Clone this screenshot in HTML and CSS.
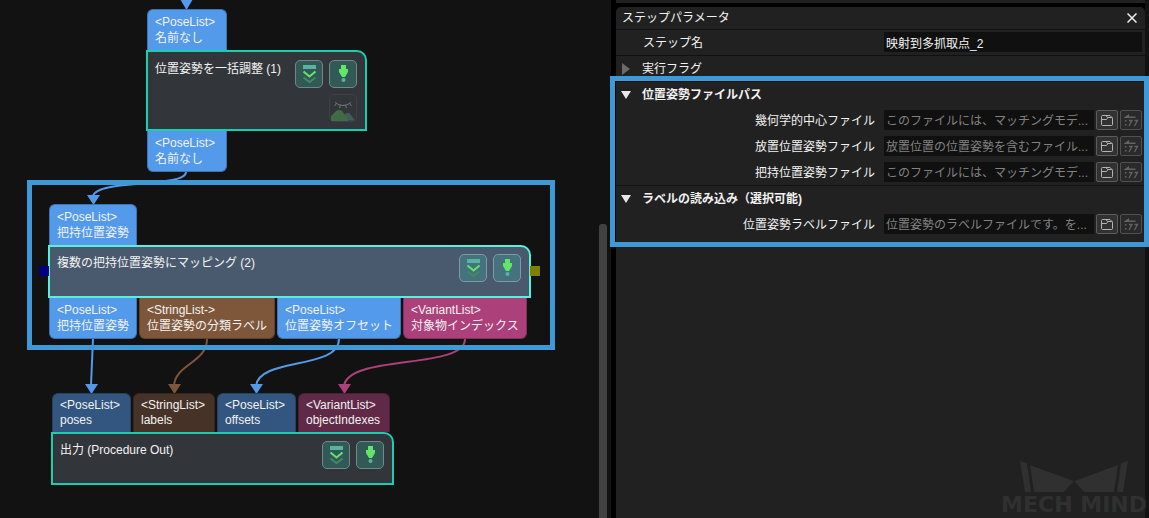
FILE: index.html
```html
<!DOCTYPE html>
<html lang="ja">
<head>
<meta charset="utf-8">
<title>ステップパラメータ</title>
<link rel="stylesheet" href="styles.css">
</head>
<body>
<svg class="defs" aria-hidden="true">
  <symbol id="i-run" viewBox="1 1 26 26">
    <rect x="8" y="5" width="13" height="4" fill="#58b4a2"/>
    <path d="M8.500 11.500l6 5 6-5" fill="none" stroke="#63e56c" stroke-width="2"/>
    <path d="M8.500 17.500l6 4.500 6-4.500" fill="none" stroke="#428a62" stroke-width="2"/>
  </symbol>
  <symbol id="i-step" viewBox="1 1 26 26">
    <path d="M12 5h5v4h2v3l-3 5h-3l-3-5V9h2z" fill="#63e56c"/>
    <circle cx="14.500" cy="20" r="2" fill="#58b4a2"/>
  </symbol>
  <symbol id="i-eye" viewBox="1 1 26 26">
    <path d="M15 22c2-4 5-4 7-1l4 5.500H15z" fill="#415c5a"/>
    <path d="M2 22c2-1 4-6 8-6s6 5 8 8l1 3H2z" fill="#406b46"/>
    <path d="M6 8.500q8 6 16 0M7.500 9.500l-2 2.500M11.500 11l-1 3M16.500 11l1 3M20.500 9.500l2 2.500" fill="none" stroke="#70757a" stroke-width="1"/>
  </symbol>
  <symbol id="i-folder" viewBox="1 1 20 18">
    <path d="M5.500 14.500v-8q0-1 1-1h3.500l1.500 2h4q1 0 1 1v6q0 1-1 1h-9q-1 0-1-1zM5.500 9.500h5l1.500-2M10 5.500h4l2.500 2.500" fill="none" stroke="#b4b4b4" stroke-width="1"/>
  </symbol>
  <symbol id="i-swap" viewBox="1 1 20 18">
    <path d="M4 7.500l5-3.500v2.500h6.500V8H4z" fill="#636363"/>
    <path d="M5 10h1.500v1.500H5zM5 14h1.500v1.500H5z" fill="#636363"/>
    <path d="M9 10.500h3l-3 5.500M14.500 10.500h3l-3 5.500" fill="none" stroke="#636363" stroke-width="1.300"/>
  </symbol>
</svg>
<div class="app">
  <main class="canvas">
    <svg class="edges" aria-hidden="true">
      <g class="pose"><path d="M186 172C186 188 97 179 93 196M93 339L91 385M339 339C339 370 259 357 256 386"/>
        <path class="tip" d="M180 -1h13l-6.500 11zM87 195h13l-6.500 10zM85 384h13l-6.500 10zM250 384h13l-6.500 10z"/></g>
      <g class="string"><path d="M207 339C207 363 175 364 174 386"/><path class="tip" d="M168 384h13l-6.500 10z"/></g>
      <g class="variant"><path d="M465 339C465 370 348 354 344 386"/><path class="tip" d="M338 384h13l-6.500 10z"/></g>
    </svg>

    <section class="node adjust">
      <div class="ports in"><div class="port pose w80">&lt;PoseList&gt;<br>名前なし</div></div>
      <div class="body">
        <span class="title">位置姿勢を一括調整 (1)</span>
        <div class="tools">
          <button class="tool" aria-label="続けて実行"><svg><use href="#i-run"/></svg></button>
          <button class="tool" aria-label="実行"><svg><use href="#i-step"/></svg></button>
          <button class="tool dim" aria-label="表示"><svg><use href="#i-eye"/></svg></button>
        </div>
      </div>
      <div class="ports out"><div class="port pose w80">&lt;PoseList&gt;<br>名前なし</div></div>
    </section>

    <section class="node mapping">
      <div class="ports in"><div class="port pose">&lt;PoseList&gt;<br>把持位置姿勢</div></div>
      <div class="body">
        <span class="pin left"></span>
        <span class="title">複数の把持位置姿勢にマッピング (2)</span>
        <div class="tools">
          <button class="tool" aria-label="続けて実行"><svg><use href="#i-run"/></svg></button>
          <button class="tool" aria-label="実行"><svg><use href="#i-step"/></svg></button>
        </div>
        <span class="pin right"></span>
      </div>
      <div class="ports out">
        <div class="port pose">&lt;PoseList&gt;<br>把持位置姿勢</div>
        <div class="port string">&lt;StringList-&gt;<br>位置姿勢の分類ラベル</div>
        <div class="port pose">&lt;PoseList&gt;<br>位置姿勢オフセット</div>
        <div class="port variant">&lt;VariantList&gt;<br>対象物インデックス</div>
      </div>
    </section>

    <section class="node output">
      <div class="ports in">
        <div class="port pose w79">&lt;PoseList&gt;<br>poses</div>
        <div class="port string w82">&lt;StringList&gt;<br>labels</div>
        <div class="port pose w79">&lt;PoseList&gt;<br>offsets</div>
        <div class="port variant w92">&lt;VariantList&gt;<br>objectIndexes</div>
      </div>
      <div class="body">
        <span class="title">出力 (Procedure Out)</span>
        <div class="tools">
          <button class="tool" aria-label="続けて実行"><svg><use href="#i-run"/></svg></button>
          <button class="tool" aria-label="実行"><svg><use href="#i-step"/></svg></button>
        </div>
      </div>
    </section>

    <div class="mark"></div>
    <div class="scroll"></div>
  </main>

  <aside class="side">
    <div class="strip"></div>
    <div class="panel">
      <header class="head"><span>ステップパラメータ</span>
        <button class="close" aria-label="閉じる"><svg viewBox="0 0 10 10"><path d="M.5 .5l9 9M9.500 .5l-9 9"/></svg></button>
      </header>
      <div class="row line">
        <label class="name" for="step">ステップ名</label>
        <input id="step" class="field" value="映射到多抓取点_2">
      </div>
      <div class="row line">
        <button class="group closed"><svg viewBox="0 0 10 12"><path d="M1 0l8 6-8 6z"/></svg>実行フラグ</button>
      </div>
      <div class="row line">
        <button class="group open"><svg viewBox="0 0 10 12"><path d="M0 2h10L5 10z"/></svg>位置姿勢ファイルパス</button>
      </div>
      <div class="row">
        <label class="key" for="f1">幾何学的中心ファイル</label>
        <input id="f1" class="field" placeholder="このファイルには、マッチングモデ...">
        <button class="act" aria-label="開く"><svg><use href="#i-folder"/></svg></button>
        <button class="act off" aria-label="相対パス"><svg><use href="#i-swap"/></svg></button>
      </div>
      <div class="row">
        <label class="key" for="f2">放置位置姿勢ファイル</label>
        <input id="f2" class="field" placeholder="放置位置の位置姿勢を含むファイル...">
        <button class="act" aria-label="開く"><svg><use href="#i-folder"/></svg></button>
        <button class="act off" aria-label="相対パス"><svg><use href="#i-swap"/></svg></button>
      </div>
      <div class="row">
        <label class="key" for="f3">把持位置姿勢ファイル</label>
        <input id="f3" class="field" placeholder="このファイルには、マッチングモデ...">
        <button class="act" aria-label="開く"><svg><use href="#i-folder"/></svg></button>
        <button class="act off" aria-label="相対パス"><svg><use href="#i-swap"/></svg></button>
      </div>
      <div class="row line">
        <button class="group open"><svg viewBox="0 0 10 12"><path d="M0 2h10L5 10z"/></svg>ラベルの読み込み（選択可能)</button>
      </div>
      <div class="row">
        <label class="key" for="f4">位置姿勢ラベルファイル</label>
        <input id="f4" class="field" placeholder="位置姿勢のラベルファイルです。を...">
        <button class="act" aria-label="開く"><svg><use href="#i-folder"/></svg></button>
        <button class="act off" aria-label="相対パス"><svg><use href="#i-swap"/></svg></button>
      </div>
    </div>
    <div class="mark"></div>
    <div class="brand">
      <svg viewBox="0 0 108 31"><path d="M0 0l7 2.500L11 31H5zM10 4l43.500 16L44 31H14zM108 0l-7 2.500L97 31h6zM98 4L54.500 20 64 31h30z"/></svg>
      <span>MECH MIND</span>
    </div>
  </aside>
</div>
</body>
</html>
```

FILE: styles.css
```css
* { box-sizing: border-box; }
body {
  margin: 0;
  background: #000;
  color: #f2f2f2;
  font: 12px/16px "Liberation Sans", "Noto Sans CJK JP", sans-serif;
}
button, input { font: inherit; color: inherit; padding: 0; border: 0; background: none; }
svg { display: block; }
.defs { position: absolute; width: 0; height: 0; }
.app { display: flex; min-height: 100vh; overflow: hidden; }

/* Graph canvas */
.canvas { position: relative; flex: 0 0 611px; background: #121212; }
.edges { position: absolute; inset: 0; width: 100%; height: 100%; fill: none; stroke-width: 2; }
.edges .pose { stroke: #539aea; --tip: #539aea; }
.edges .string { stroke: #7e573b; --tip: #7e573b; }
.edges .variant { stroke: #ab407a; --tip: #ab407a; }
.edges .tip { fill: var(--tip); stroke: none; }

.node { position: absolute; display: flex; flex-direction: column; }
.adjust { left: 146px; top: 9px; width: 221px; }
.mapping { left: 48px; top: 204px; width: 483px; }
.output { left: 51px; top: 393px; width: 343px; line-height: 15px; }

.ports { display: flex; gap: 2px; padding-left: 1px; }
.port { padding: 4px 7px; border: 1px solid #3e74b2; white-space: nowrap; }
.in .port { border-bottom: 0; border-radius: 6px 6px 0 0; }
.out .port { border-top: 0; border-radius: 0 0 6px 6px; }
.port.pose { background: #539aea; }
.port.string { background: #7e573b; border-color: #5f422d; }
.port.variant { background: #ab407a; border-color: #81305c; }
.output .pose { background: #32567f; border-color: #26415f; }
.output .string { background: #463226; border-color: #35261c; }
.output .variant { background: #5f2947; border-color: #481f36; }
.w79 { width: 79px; }
.w80 { width: 80px; }
.w82 { width: 82px; }
.w92 { width: 92px; }

.body {
  position: relative;
  display: flex;
  justify-content: space-between;
  min-height: 53px;
  padding: 7px 8px 7px 7px;
  border: 2px solid #19cfb0;
  border-radius: 0 10px 0 0;
  background: #32363b;
}
.adjust .body { min-height: 81px; padding-top: 8px; }
.mapping .body { background: #495a6e; border-color: #56f0dc; }
.title { padding-top: 1px; line-height: 16px; white-space: nowrap; }
.tools { display: flex; flex-wrap: wrap; justify-content: flex-end; align-content: flex-start; gap: 6px; width: 62px; }
.tool { width: 28px; height: 28px; border: 1px solid #6d8a88; border-radius: 5px; background: #335957; }
.mapping .tool { background: #45727c; border-color: #7d9aa5; }
.tool svg { width: 26px; height: 26px; }
.tool.dim { border-color: #3d4146; background: none; }
.pin { position: absolute; top: 19px; width: 10px; height: 10px; }
.pin.left { left: -11px; background: #000080; }
.pin.right { right: -11px; background: #808000; }

.mark { position: absolute; border: 5px solid #3f99d6; pointer-events: none; }
.canvas .mark { left: 27px; top: 180px; width: 528px; height: 170px; }
.scroll { position: absolute; right: 4px; top: 224px; bottom: 0; width: 8px; border-radius: 3px 3px 0 0; background: #414141; }

/* Parameter panel */
.side { position: relative; flex: 1; display: flex; flex-direction: column; gap: 4px; padding: 0 4px 0 5px; }
.side::after { content: ""; position: absolute; top: 0; right: 0; bottom: 0; width: 4px; background: #121212; }
.strip { height: 3px; background: #212121; }
.panel { flex: 1; border-radius: 5px 5px 0 0; background: #212121; }
.head { display: flex; align-items: center; justify-content: space-between; height: 22px; padding: 0 8px 0 6px; }
.close svg { width: 10px; height: 10px; fill: none; stroke: #eee; stroke-width: 1.5; }
.row { display: flex; align-items: center; gap: 2px; height: 26px; padding: 0 3px 1px 0; border-top: 1px solid transparent; }
.row.line { border-color: #101010; }
.name, .key { flex: 0 0 266px; padding: 2px 0 0 27px; }
.key { padding: 2px 7px 0 0; text-align: right; }
.field { flex: 1; min-width: 0; height: 20px; padding: 1px 2px 0; background: #101010; text-overflow: ellipsis; }
#step { padding-top: 0; font-family: "Liberation Sans", "Noto Sans CJK SC", sans-serif; }
.field::placeholder { color: #828282; }
.group { display: flex; align-items: center; gap: 11px; padding: 2px 0 0 5px; }
.group svg { width: 10px; height: 12px; fill: #e8e8e8; }
.closed svg { fill: #6a6a6a; }
.open { font-weight: bold; }
.act { width: 22px; height: 20px; border: 1px solid #5c5c5c; border-radius: 2px; background: #323232; }
.act.off { border-color: #505050; background: #2a2a2a; }
.act svg { width: 20px; height: 18px; }
.side .mark { left: -1px; right: 0; top: 76px; height: 171px; z-index: 1; }
.brand { position: absolute; right: 2px; bottom: 0; z-index: 1; display: flex; flex-direction: column; align-items: center; color: #303030; font: bold 22px/26px "DejaVu Sans", sans-serif; white-space: nowrap; }
.brand svg { width: 108px; height: 31px; fill: #303030; }
```
